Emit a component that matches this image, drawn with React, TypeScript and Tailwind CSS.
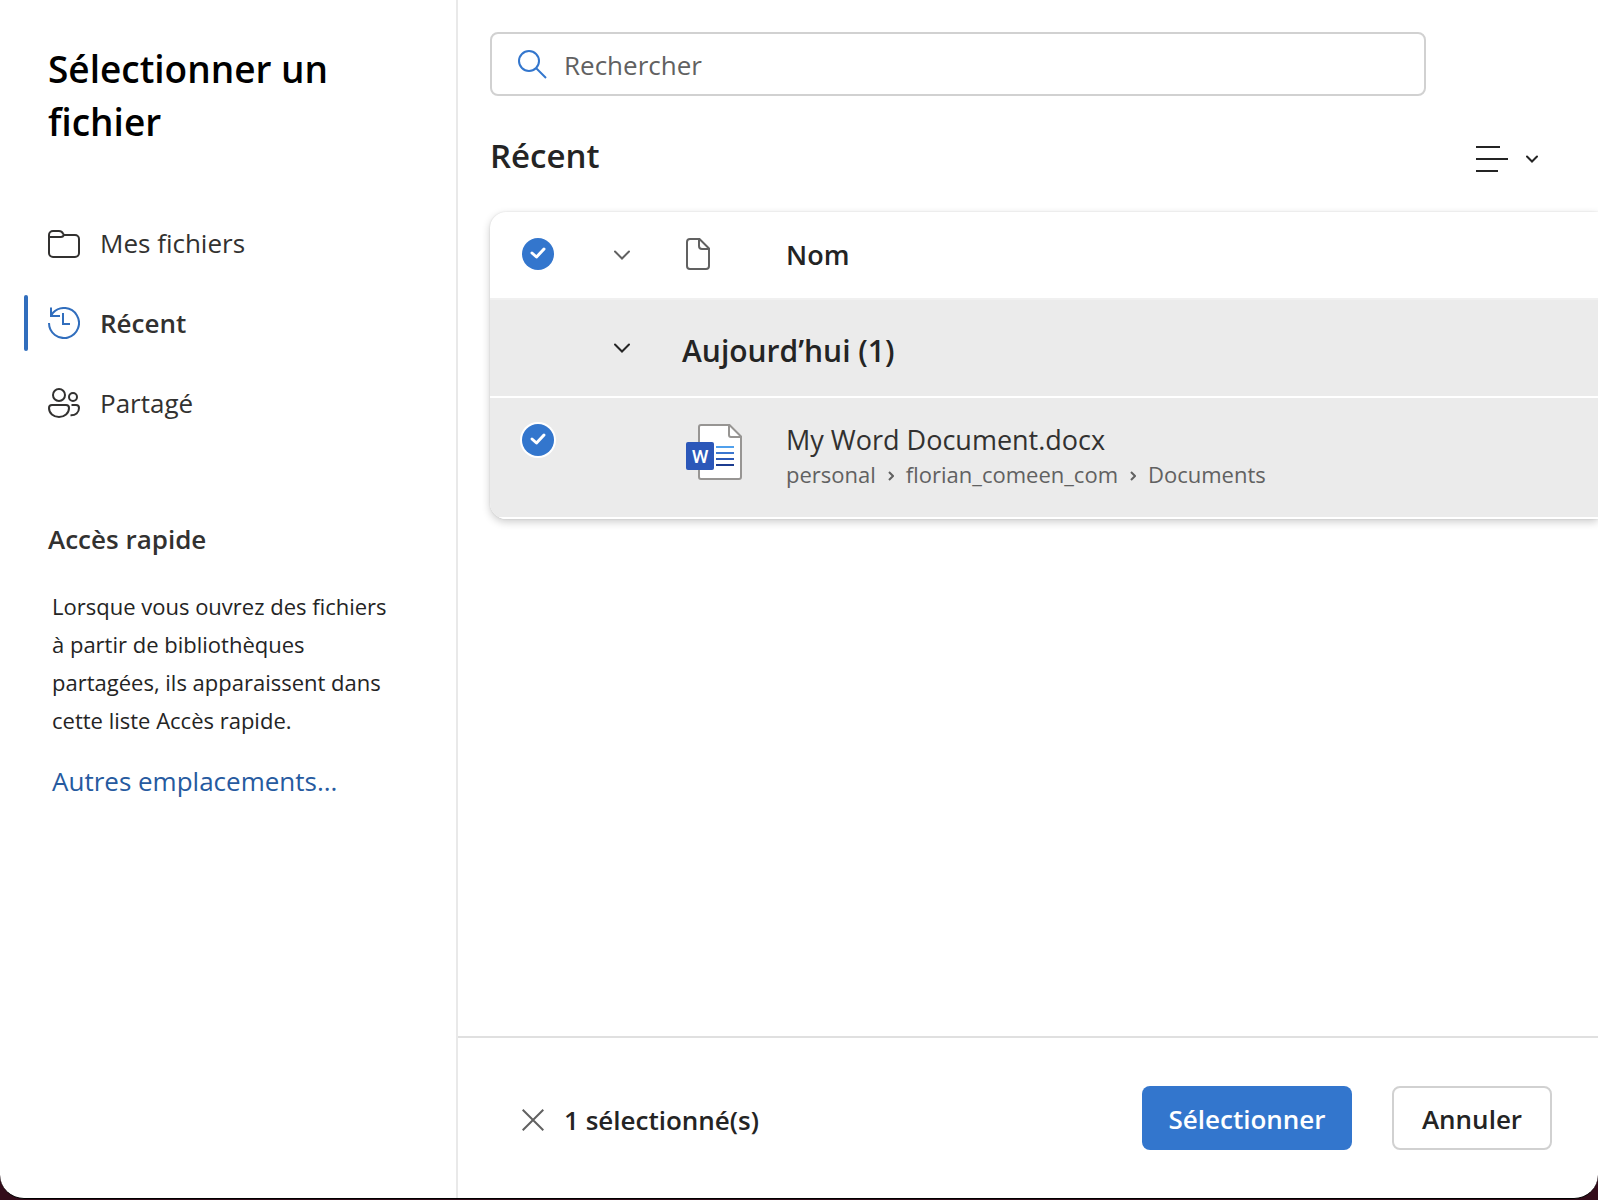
import { useState, type ReactNode } from 'react'

type View = 'files' | 'recent' | 'shared'

const breadcrumb = ['personal', 'florian_comeen_com', 'Documents']

function FolderIcon() {
  return (
    <svg viewBox="0 0 32 32" className="size-8" fill="none" stroke="currentColor" strokeWidth="2">
      <path d="M1 10V8a4 4 0 0 1 4-4h6c2 0 3.200.8 4 2.500L16 8h11a4 4 0 0 1 4 4v14a4 4 0 0 1-4 4H5a4 4 0 0 1-4-4V10h12c1.300 0 2.300-.7 3-2" />
    </svg>
  )
}

function HistoryIcon() {
  return (
    <svg viewBox="0 0 32 32" className="size-8" fill="none" stroke="currentColor" strokeWidth="2">
      <path d="M1 16A15 15 0 1 0 5 5.800L3 9" />
      <path d="M3 0.500V9h9" />
      <path d="M15 6v11h7" />
    </svg>
  )
}

function PeopleIcon() {
  return (
    <svg viewBox="0 0 32 32" className="size-8" fill="none" stroke="currentColor" strokeWidth="2">
      <circle cx="11" cy="8" r="6" />
      <circle cx="25" cy="10" r="4" />
      <path d="M4 18h14a3 3 0 0 1 3 3c0 5.500-4.500 9-10 9S1 26.500 1 21a3 3 0 0 1 3-3Z" />
      <path d="M23.500 18H28a3 3 0 0 1 3 3c0 4.500-3.500 7.500-8.500 7.200" />
    </svg>
  )
}

function ChevronDown() {
  return (
    <svg viewBox="0 0 16 10" className="h-[10px] w-4" fill="none" stroke="currentColor" strokeWidth="2" strokeLinecap="round">
      <path d="M1 1.500l7 7 7-7" />
    </svg>
  )
}

function DocumentIcon() {
  return (
    <svg viewBox="0 0 24 32" className="h-8 w-6" fill="none" stroke="currentColor" strokeWidth="2">
      <path d="M4 1h9.500L23 10.500V28a3 3 0 0 1-3 3H4a3 3 0 0 1-3-3V4a3 3 0 0 1 3-3Z" />
      <path d="M13 1v7a3 3 0 0 0 3 3h7" />
    </svg>
  )
}

function WordIcon() {
  return (
    <svg viewBox="0 0 56 56" className="size-14" role="img" aria-label="Word">
      <path d="M15 1h28.500L55 12.500V53a2 2 0 0 1-2 2H15a2 2 0 0 1-2-2V3a2 2 0 0 1 2-2Z" fill="#fff" stroke="#979593" strokeWidth="2" />
      <path d="M43 1v10a2 2 0 0 0 2 2h10" fill="none" stroke="#979593" strokeWidth="2" />
      <path d="M30 23h18" stroke="#50a0ec" strokeWidth="2" />
      <path d="M30 29h18" stroke="#3a76d0" strokeWidth="2" />
      <path d="M30 35h18" stroke="#2b58b5" strokeWidth="2" />
      <path d="M30 41h18" stroke="#1c3c90" strokeWidth="2" />
      <rect y="18" width="28" height="28" rx="2" fill="#2b57b9" />
      <text x="14" y="39" textAnchor="middle" fontSize="19" fontWeight="500" fill="#fff" className="font-['Roboto',sans-serif]">
        W
      </text>
    </svg>
  )
}

type RoundCheckboxProps = {
  label: string
  checked: boolean
  onChange: (checked: boolean) => void
}

function RoundCheckbox({ label, checked, onChange }: RoundCheckboxProps) {
  return (
    <label className="relative block size-8">
      <input
        type="checkbox"
        aria-label={label}
        checked={checked}
        onChange={(e) => onChange(e.target.checked)}
        className="block size-8 appearance-none rounded-full border-2 border-[#8a8886] ring-2 ring-white checked:border-0 checked:bg-[#3376cd]"
      />
      {checked && (
        <svg viewBox="0 0 32 32" className="pointer-events-none absolute inset-0 size-8" fill="none" stroke="#fff" strokeWidth="3" strokeLinecap="round" strokeLinejoin="round">
          <path d="M10 15l4.500 4L22 11" />
        </svg>
      )}
    </label>
  )
}

type NavItemProps = {
  icon: ReactNode
  label: string
  active: boolean
  onClick: () => void
}

function NavItem({ icon, label, active, onClick }: NavItemProps) {
  return (
    <li className="flex h-20 items-center">
      <button
        type="button"
        onClick={onClick}
        aria-current={active ? 'page' : undefined}
        className={
          active
            ? 'flex h-14 w-full items-center text-[26px] font-semibold text-[#323130]'
            : 'flex h-14 w-full items-center text-[26px] text-[#323130]'
        }
      >
        <span className={active ? 'mr-5 h-14 w-1 rounded-sm bg-[#316ebd]' : 'mr-5 h-14 w-1'} />
        <span className={active ? 'mr-5 text-[#316ebd]' : 'mr-5'}>{icon}</span>
        {label}
      </button>
    </li>
  )
}

export default function App() {
  const [view, setView] = useState<View>('recent')
  const [query, setQuery] = useState('')
  const [selected, setSelected] = useState(true)
  const [expanded, setExpanded] = useState(true)

  return (
    <div className="h-screen bg-[#330c1a] pb-px font-['Open_Sans',sans-serif] text-[#242424]">
      <div className="flex h-full rounded-b-3xl border-b border-black bg-white">
        <aside className="w-[458px] shrink-0 border-r-2 border-[#e9e9e9] pt-[42px]">
          <h1 className="pr-16 pl-12 text-[37px] leading-[53px] font-semibold text-black">Sélectionner un fichier</h1>

          <nav className="mt-[55px] pl-6">
            <ul>
              <NavItem icon={<FolderIcon />} label="Mes fichiers" active={view === 'files'} onClick={() => setView('files')} />
              <NavItem icon={<HistoryIcon />} label="Récent" active={view === 'recent'} onClick={() => setView('recent')} />
              <NavItem icon={<PeopleIcon />} label="Partagé" active={view === 'shared'} onClick={() => setView('shared')} />
            </ul>
          </nav>

          <h2 className="mt-[78px] pl-12 text-[26px] leading-9 font-semibold text-[#323130]">Accès rapide</h2>
          <p className="mt-[30px] pr-16 pl-[52px] text-[22px] leading-[38px]">
            Lorsque vous ouvrez des fichiers à partir de bibliothèques partagées, ils apparaissent dans cette liste Accès
            rapide.
          </p>
          <a href="#emplacements" className="mt-[22px] block pl-[52px] text-[26px] leading-10 text-[#265a9f]">
            Autres emplacements...
          </a>
        </aside>

        <div className="flex min-w-0 flex-1 flex-col">
          <main className="flex-1 overflow-hidden pt-8 pl-8">
            <label className="mr-[172px] flex h-16 items-center rounded-lg border-2 border-[#d1d1d1] px-6">
              <svg viewBox="0 0 32 32" className="mr-4 size-8" fill="none" stroke="#3376cd" strokeWidth="2">
                <circle cx="13" cy="13" r="10" />
                <path d="M20 20l10 10" />
              </svg>
              <input
                type="search"
                aria-label="Rechercher"
                placeholder="Rechercher"
                value={query}
                onChange={(e) => setQuery(e.target.value)}
                className="min-w-0 flex-1 pt-0.5 text-[26px] outline-none placeholder:text-[#616161]"
              />
            </label>

            <div className="mt-[34px] flex items-center justify-between pr-[60px]">
              <h2 className="text-[33px] leading-[52px] font-semibold">Récent</h2>
              <button type="button" aria-label="Options d’affichage" className="flex items-center gap-[18px] pt-1.5">
                <svg viewBox="0 0 32 28" className="h-7 w-8" stroke="currentColor" strokeWidth="2">
                  <path d="M0 2h24M0 14h32M0 26h22" />
                </svg>
                <svg viewBox="0 0 12 8" className="h-2 w-3" fill="none" stroke="currentColor" strokeWidth="2" strokeLinecap="round">
                  <path d="M1 1.500l5 5 5-5" />
                </svg>
              </button>
            </div>

            <div className="mt-[30px] overflow-hidden rounded-l-2xl shadow-[0_3px_8px_rgba(0,0,0,0.2),0_0_2px_rgba(0,0,0,0.12)]">
              <table className="w-full table-fixed border-collapse text-left">
                <colgroup>
                  <col className="w-24" />
                  <col className="w-[72px]" />
                  <col className="w-32" />
                  <col />
                </colgroup>
                <thead>
                  <tr className="h-[87px] border-b-2 border-[#f0f0f0]">
                    <th className="pb-0.5 pl-8">
                      <RoundCheckbox label="Tout sélectionner" checked={selected} onChange={setSelected} />
                    </th>
                    <th className="pl-7 text-[#616161]">
                      <ChevronDown />
                    </th>
                    <th className="pb-0.5 pl-7 text-[#616161]">
                      <DocumentIcon />
                    </th>
                    <th className="text-[27px] font-semibold">Nom</th>
                  </tr>
                </thead>
                <tbody className="bg-[#ebebeb]">
                  <tr className="h-[98px] border-b-2 border-white">
                    <td />
                    <td className="pl-7">
                      <button
                        type="button"
                        aria-label="Aujourd’hui"
                        aria-expanded={expanded}
                        onClick={() => setExpanded(!expanded)}
                        className="block"
                      >
                        <ChevronDown />
                      </button>
                    </td>
                    <th colSpan={2} className="pt-1 pl-6 text-[30px] font-semibold">
                      Aujourd’hui (1)
                    </th>
                  </tr>
                  {expanded && (
                    <tr className="h-[121px] border-b-2 border-white align-top">
                      <td className="pt-[26px] pl-8">
                        <RoundCheckbox label="My Word Document.docx" checked={selected} onChange={setSelected} />
                      </td>
                      <td />
                      <td className="pt-[26px] pl-7">
                        <WordIcon />
                      </td>
                      <td className="pt-6">
                        <div className="text-[27px] leading-9 text-[#323130]">My Word Document.docx</div>
                        <div className="flex items-center text-[22px] leading-8 text-[#616161]">
                          {breadcrumb.map((part, i) => (
                            <span key={part} className="flex items-center">
                              {i > 0 && (
                                <svg viewBox="0 0 6 10" className="mx-3 mt-1 h-[10px] w-[6px]" fill="none" stroke="currentColor" strokeWidth="2">
                                  <path d="M1 1l4 4-4 4" />
                                </svg>
                              )}
                              {part}
                            </span>
                          ))}
                        </div>
                      </td>
                    </tr>
                  )}
                </tbody>
              </table>
            </div>
          </main>

          <footer className="flex h-[162px] items-center border-t-2 border-[#e0e0e0] pr-[46px] pl-16">
            <div className="flex items-center pt-1">
              <button type="button" aria-label="Effacer la sélection" onClick={() => setSelected(false)} className="text-[#616161]">
                <svg viewBox="0 0 22 22" className="size-[22px]" stroke="currentColor" strokeWidth="2">
                  <path d="M0.700 0.700l20.600 20.600M21.300 0.700L0.700 21.300" />
                </svg>
              </button>
              <span className="ml-5 text-[26px] font-semibold">{selected ? 1 : 0} sélectionné(s)</span>
            </div>
            <div className="ml-auto flex gap-10 text-[26px] font-semibold">
              <button type="button" className="h-16 w-[210px] rounded-lg bg-[#3376cd] pt-0.5 text-white">
                Sélectionner
              </button>
              <button type="button" className="h-16 w-40 rounded-lg border-2 border-[#d1d1d1] pt-0.5">
                Annuler
              </button>
            </div>
          </footer>
        </div>
      </div>
    </div>
  )
}
